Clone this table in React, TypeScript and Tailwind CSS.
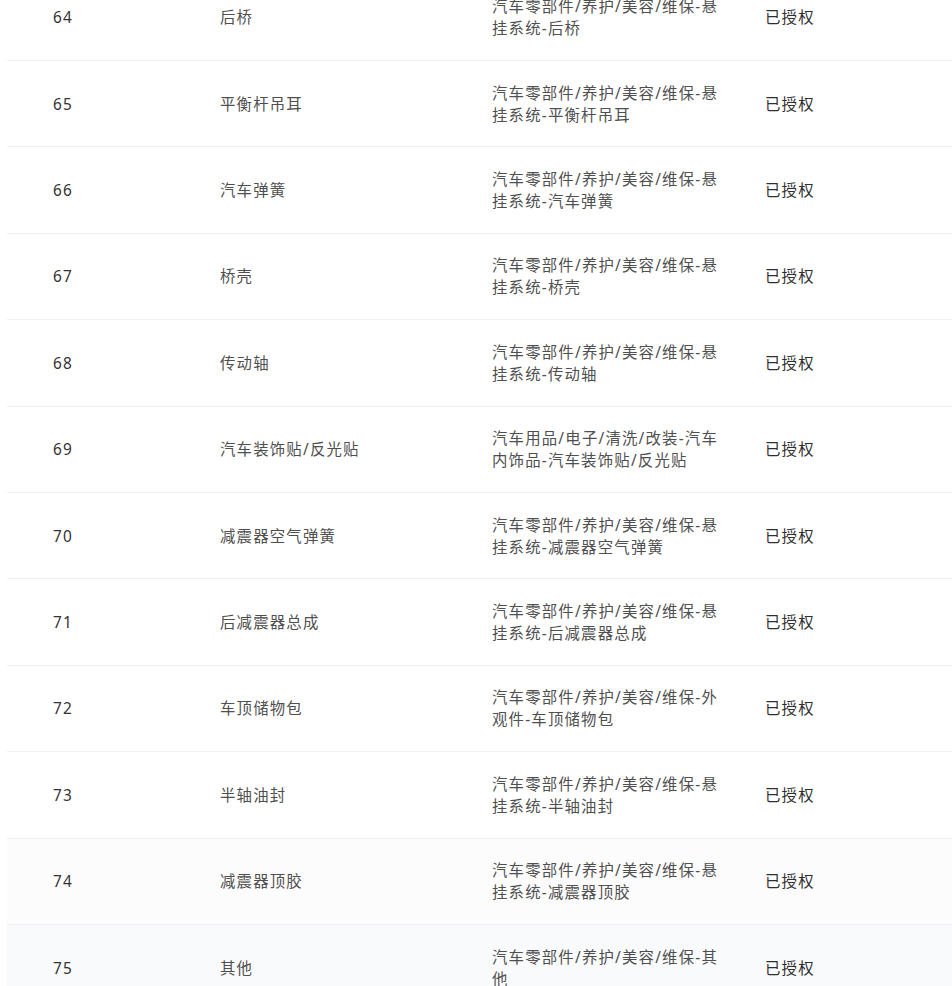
import React from 'react'

type Row = { no: number; name: string; category: string; status: string }

const rows: Row[] = [
  { no: 64, name: '后桥', category: '汽车零部件/养护/美容/维保-悬挂系统-后桥', status: '已授权' },
  { no: 65, name: '平衡杆吊耳', category: '汽车零部件/养护/美容/维保-悬挂系统-平衡杆吊耳', status: '已授权' },
  { no: 66, name: '汽车弹簧', category: '汽车零部件/养护/美容/维保-悬挂系统-汽车弹簧', status: '已授权' },
  { no: 67, name: '桥壳', category: '汽车零部件/养护/美容/维保-悬挂系统-桥壳', status: '已授权' },
  { no: 68, name: '传动轴', category: '汽车零部件/养护/美容/维保-悬挂系统-传动轴', status: '已授权' },
  { no: 69, name: '汽车装饰贴/反光贴', category: '汽车用品/电子/清洗/改装-汽车内饰品-汽车装饰贴/反光贴', status: '已授权' },
  { no: 70, name: '减震器空气弹簧', category: '汽车零部件/养护/美容/维保-悬挂系统-减震器空气弹簧', status: '已授权' },
  { no: 71, name: '后减震器总成', category: '汽车零部件/养护/美容/维保-悬挂系统-后减震器总成', status: '已授权' },
  { no: 72, name: '车顶储物包', category: '汽车零部件/养护/美容/维保-外观件-车顶储物包', status: '已授权' },
  { no: 73, name: '半轴油封', category: '汽车零部件/养护/美容/维保-悬挂系统-半轴油封', status: '已授权' },
  { no: 74, name: '减震器顶胶', category: '汽车零部件/养护/美容/维保-悬挂系统-减震器顶胶', status: '已授权' },
  { no: 75, name: '其他', category: '汽车零部件/养护/美容/维保-其他', status: '已授权' },
]

const rowBg = (no: number) => {
  if (no === 74) return 'bg-[#fcfcfd]'
  if (no === 75) return 'bg-[#f9fafc]'
  return 'bg-white'
}

export default function App() {
  return (
    <div
      className="h-[986px] w-[952px] overflow-hidden bg-white pl-[7px] text-[15.4px] leading-[22px] tracking-[1.2px]"
      style={{ fontFamily: '"Noto Sans", "Noto Sans CJK SC", sans-serif' }}
    >
      <div className="-mt-[25.4px]">
        {rows.map((r) => (
          <div
            key={r.no}
            className={`grid h-[86.4px] grid-cols-[198px_272px_273px_1fr] items-center border-b border-[#f0f0f2] pt-[2px] ${rowBg(r.no)}`}
          >
            <div className="pl-[46px] text-[#333333]">{r.no}</div>
            <div className="pl-[15px] text-[#4f4f4f]">{r.name}</div>
            <div className="pl-[15px] pr-[20px] text-[#4f4f4f]">
              <div className="max-w-[232px]">{r.category}</div>
            </div>
            <div className="pl-[15px] text-[#2f2f2f]">{r.status}</div>
          </div>
        ))}
      </div>
    </div>
  )
}
